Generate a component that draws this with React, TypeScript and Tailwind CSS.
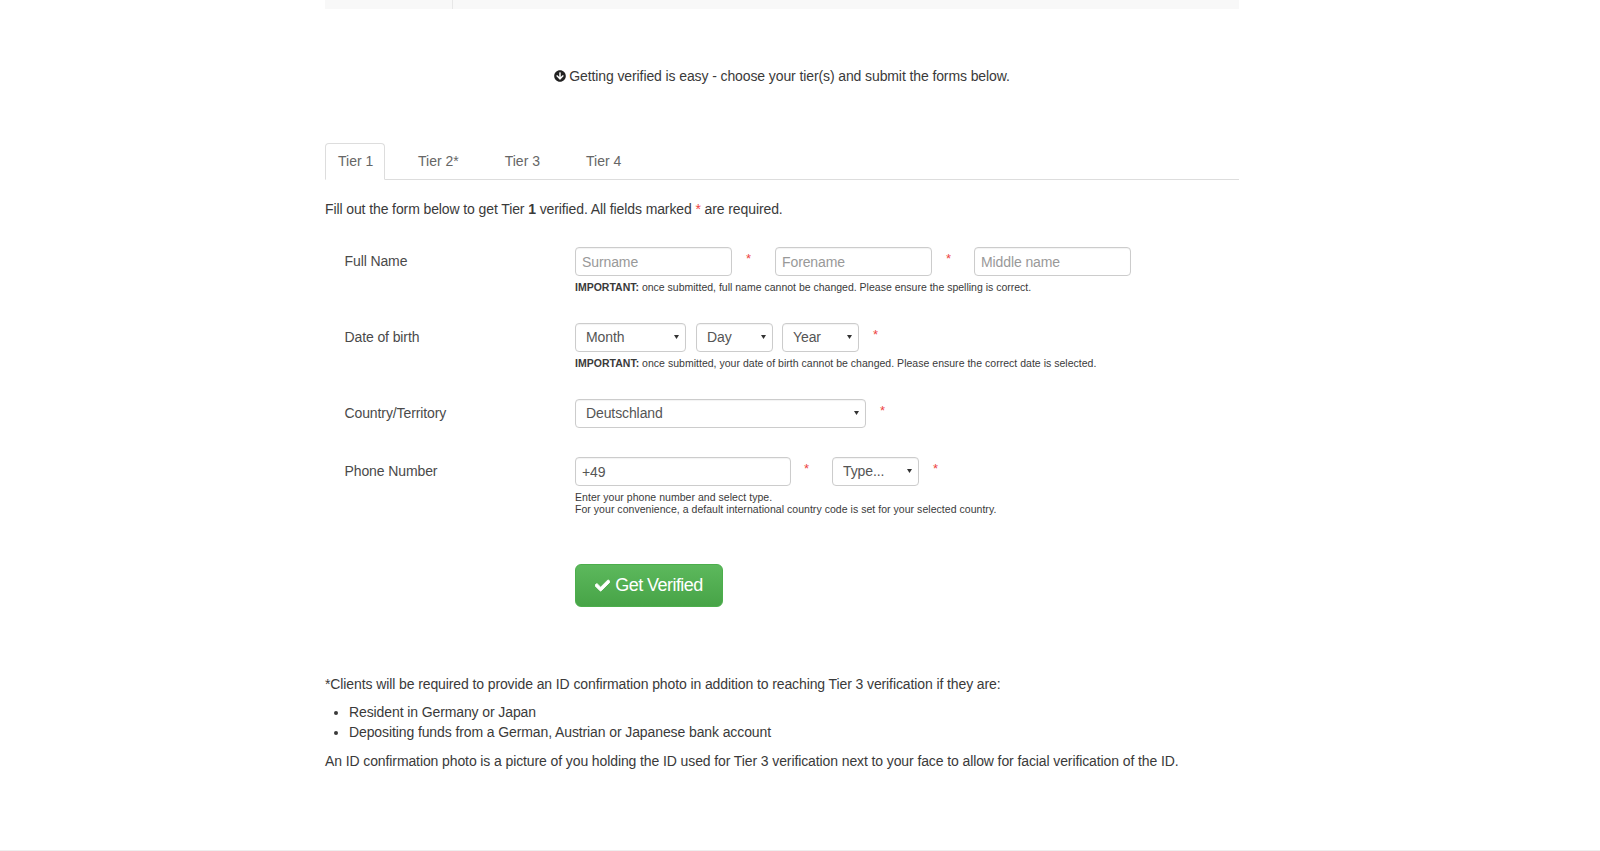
import { FaArrowCircleDown, FaCheck } from "react-icons/fa";

const input =
  "h-[29px] w-[157px] rounded border border-[#ccc] bg-white px-[6px] text-[14px] text-[#555] placeholder:text-[#999] shadow-[inset_0_1px_1px_rgba(0,0,0,0.05)]";
const select =
  "h-[29px] w-full appearance-none rounded border border-[#ccc] bg-white pl-[10px] pr-[16px] text-[14px] leading-[25px] text-[#555] shadow-[inset_0_1px_1px_rgba(0,0,0,0.05)]";
const help = "text-[10.5px] leading-[12px] text-[#3a3a3a]";

function Star({ className = "" }: { className?: string }) {
  return <span className={`self-start pt-[2px] text-[13px] leading-[20px] text-[#e44] ${className}`}>*</span>;
}

function Row({
  label,
  className,
  children,
}: {
  label: string;
  className: string;
  children: React.ReactNode;
}) {
  return (
    <div className={`grid grid-cols-[230.5px_1fr] pl-[19.5px] ${className}`}>
      <label className="text-[14px] leading-[29px] text-[#4a4a4a]">{label}</label>
      <div>{children}</div>
    </div>
  );
}

function Select({ width, value }: { width: string; value: string }) {
  return (
    <div className={`relative ${width}`}>
      <select className={select} defaultValue={value}>
        <option>{value}</option>
      </select>
      <svg viewBox="0 0 5 4" className="pointer-events-none absolute right-[7px] top-[12px] h-[4px] w-[5px] fill-[#333]">
        <path d="M0 0h5L2.5 4z" />
      </svg>
    </div>
  );
}

export default function App() {
  return (
    <div className="flex h-[851px] flex-col bg-white font-['Liberation_Sans',Arial,sans-serif] text-[14px] tracking-[-0.105px] text-[#3a3a3a]">
      <div className="ml-[325px] w-[914px]">
        <div className="flex h-[9px] bg-[#f8f8f8]">
          <div className="w-[128px] border-r border-[#e7e7e7]" />
        </div>

        <p className="mt-[57px] flex items-center justify-center gap-[3px] leading-[20px]">
          <FaArrowCircleDown className="h-[12px] w-[12px] text-[#222]" />
          <span>Getting verified is easy - choose your tier(s) and submit the forms below.</span>
        </p>

        <div className="mt-[57px] flex h-[37px] gap-[20px] border-b border-[#ddd] tracking-normal text-[#666]">
          <div className="h-[37px] w-[60px] whitespace-nowrap rounded-t border border-[#ddd] border-b-white bg-white pl-[12px] leading-[35px]">
            Tier 1
          </div>
          <div className="px-[13px] leading-[37px]">Tier 2*</div>
          <div className="px-[13px] leading-[37px]">Tier 3</div>
          <div className="px-[13px] leading-[37px]">Tier 4</div>
        </div>

        <p className="mt-[19px] leading-[20px]">
          Fill out the form below to get Tier <b>1</b> verified. All fields marked{" "}
          <span className="text-[#e44]">*</span> are required.
        </p>

        <Row label="Full Name" className="mt-[28px] mb-[30px]">
          <div className="flex items-center">
            <input className={input} placeholder="Surname" />
            <Star className="w-[43px] pl-[14px]" />
            <input className={input} placeholder="Forename" />
            <Star className="w-[42px] pl-[14px]" />
            <input className={input} placeholder="Middle name" />
          </div>
          <p className={`mt-[5px] tracking-normal ${help}`}>
            <b>IMPORTANT:</b> once submitted, full name cannot be changed. Please ensure the spelling is correct.
          </p>
        </Row>

        <Row label="Date of birth" className="mb-[30px]">
          <div className="flex items-center gap-[10px]">
            <Select width="w-[111px]" value="Month" />
            <Select width="w-[77px]" value="Day" />
            <Select width="-ml-[1px] w-[77px]" value="Year" />
            <Star className="pl-[4px]" />
          </div>
          <p className={`mt-[5px] tracking-[0.02px] ${help}`}>
            <b>IMPORTANT:</b> once submitted, your date of birth cannot be changed. Please ensure the correct date is selected.
          </p>
        </Row>

        <Row label="Country/Territory" className="mb-[29px]">
          <div className="flex items-center gap-[14px]">
            <Select width="w-[291px]" value="Deutschland" />
            <Star />
          </div>
        </Row>

        <Row label="Phone Number" className="">
          <div className="flex items-center">
            <input className={`${input} !w-[216px]`} defaultValue="+49" />
            <Star className="w-[41px] pl-[13px]" />
            <Select width="w-[87px]" value="Type..." />
            <Star className="pl-[14px]" />
          </div>
          <p className={`mt-[5px] tracking-[0.04px] ${help}`}>
            Enter your phone number and select type.
            <br />
            For your convenience, a default international country code is set for your selected country.
          </p>
          <button className="mt-[49px] flex h-[43px] w-[148px] items-center justify-center gap-[5px] rounded-[6px] border border-[#4cae4c] bg-gradient-to-b from-[#5cb85c] to-[#47a447] text-[18px] tracking-[-0.55px] text-white">
            <FaCheck className="h-[15px] w-[15px]" stroke="currentColor" strokeWidth={30} />
            Get Verified
          </button>
        </Row>

        <p className="mt-[67px] leading-[20px]">
          *Clients will be required to provide an ID confirmation photo in addition to reaching Tier 3 verification if they are:
        </p>
        <ul className="mt-[9px] list-disc pl-[24px] leading-[19.6px]">
          <li>Resident in Germany or Japan</li>
          <li>Depositing funds from a German, Austrian or Japanese bank account</li>
        </ul>
        <p className="mt-[8.5px] leading-[20px]">
          An ID confirmation photo is a picture of you holding the ID used for Tier 3 verification next to your face to allow for facial verification of the ID.
        </p>
      </div>

      <div className="mt-auto h-px bg-[#eee]" />
    </div>
  );
}
